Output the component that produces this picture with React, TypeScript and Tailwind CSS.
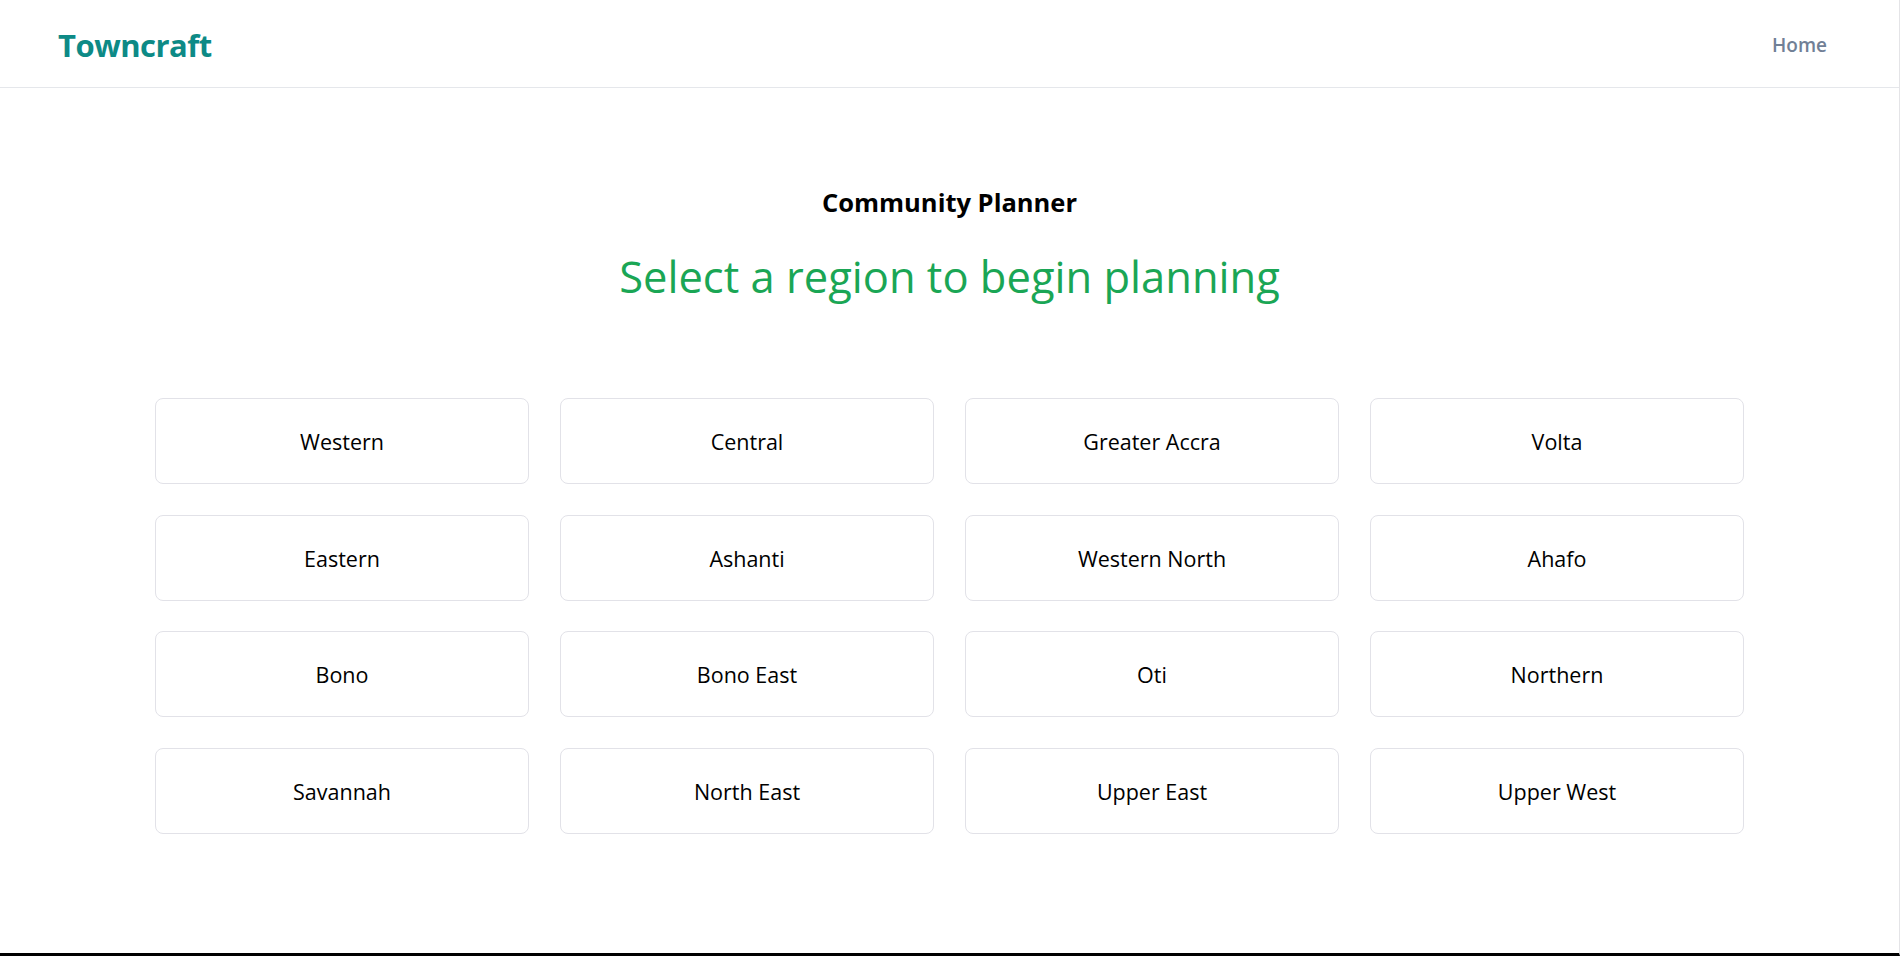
import React from "react";

const regions = [
  "Western",
  "Central",
  "Greater Accra",
  "Volta",
  "Eastern",
  "Ashanti",
  "Western North",
  "Ahafo",
  "Bono",
  "Bono East",
  "Oti",
  "Northern",
  "Savannah",
  "North East",
  "Upper East",
  "Upper West",
];

export default function App() {
  return (
    <div className="h-screen flex flex-col bg-white border-r border-r-[#e4e4e7] border-b-[3px] border-b-black font-['Open_Sans',sans-serif] overflow-hidden">
      <header className="h-[88px] shrink-0 flex items-center justify-between border-b border-[#e5e7eb] pt-1 pl-[58px] pr-[72px]">
        <span className="text-[31px] font-bold text-[#0d8a86] tracking-[-0.5px]">Towncraft</span>
        <a href="#" className="text-[19px] font-semibold text-[#718096]">Home</a>
      </header>

      <main className="flex-1 flex flex-col items-center pt-[98px]">
        <h2 className="text-[25.5px] leading-[32px] font-bold text-black">Community Planner</h2>
        <h1 className="mt-[35px] text-[43.5px] leading-[48px] font-medium text-[#1aa655]">Select a region to begin planning</h1>

        <div className="mt-[97px] w-[1589px] grid grid-cols-4 gap-x-[31px] gap-y-[30.5px]">
          {regions.map((r) => (
            <button
              key={r}
              className="h-[86px] pt-[3px] rounded-lg border border-[#e2e2e8] bg-white flex items-center justify-center text-[21.5px] font-medium text-black"
            >
              {r}
            </button>
          ))}
        </div>
      </main>
    </div>
  );
}
